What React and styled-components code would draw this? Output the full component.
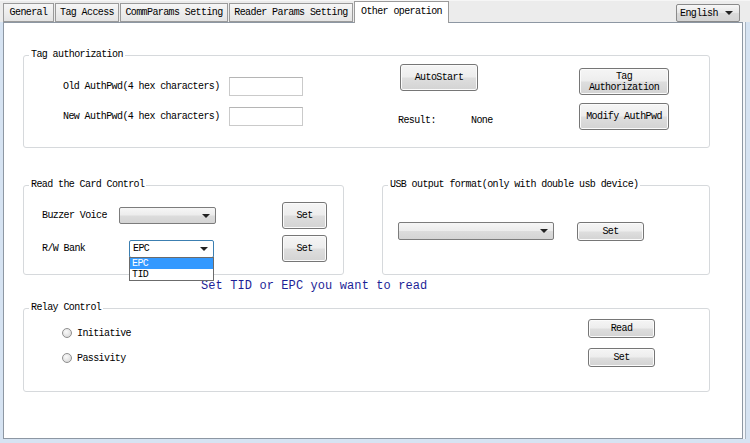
import React from "react";
import styled, { createGlobalStyle } from "styled-components";

const GlobalStyle = createGlobalStyle`
  html, body {
    margin: 0;
    padding: 0;
  }
  body {
    background: #d6e3f2;
  }
  * {
    box-sizing: border-box;
  }
`;

const mono = `"Liberation Mono", "DejaVu Sans Mono", monospace`;

const Window = styled.div`
  width: 750px;
  height: 443px;
  display: flex;
  flex-direction: column;
  background: #d6e3f2;
  font-family: ${mono};
  font-size: 10px;
  letter-spacing: -0.6px;
  color: #000;
  overflow: hidden;
`;

const Header = styled.div`
  height: 22px;
  display: flex;
  align-items: flex-end;
  padding: 0 10px 0 3px;
  background: #ececec;
  border-top: 1px solid #f6f6f6;
`;

const Tab = styled.div`
  position: relative;
  z-index: 1;
  width: ${(p) => p.$w}px;
  height: ${(p) => (p.$active ? 22 : 19)}px;
  margin-bottom: ${(p) => (p.$active ? -1 : 0)}px;
  margin-right: 1px;
  display: flex;
  align-items: ${(p) => (p.$active ? "flex-start" : "center")};
  justify-content: center;
  padding-top: ${(p) => (p.$active ? 4 : 0)}px;
  border: 1px solid #9a9a9a;
  border-bottom: ${(p) => (p.$active ? "none" : "1px solid #9a9a9a")};
  background: ${(p) =>
    p.$active ? "#ffffff" : "linear-gradient(#f6f6f6, #e4e4e4)"};
  white-space: nowrap;
`;

const LangBox = styled.div`
  margin-left: auto;
  width: 64px;
  height: 18px;
  display: flex;
  align-items: center;
  padding: 0 6px 0 3px;
  border: 1px solid #8a8a8a;
  border-radius: 2px;
  background: linear-gradient(#f7f7f7, #e6e6e6 50%, #dadada 51%, #d4d4d4);
  justify-content: space-between;
`;

const Arrow = styled.span`
  width: 0;
  height: 0;
  border-left: 4px solid transparent;
  border-right: 4px solid transparent;
  border-top: 4px solid #222;
`;

const Panel = styled.div`
  width: 740px;
  height: 417px;
  margin-left: 3px;
  background: #ffffff;
  border: 1px solid #8d97a3;
  box-shadow: 2px 0 0 #f4f7fb, 3px 0 0 #a9b4c0;
  padding: 32px 0 0 19px;
  display: flex;
  flex-direction: column;
`;

const Group = styled.div`
  position: relative;
  width: ${(p) => p.$w}px;
  height: ${(p) => p.$h}px;
  border: 1px solid #d6d9dc;
  border-radius: 3px;
  display: flex;
`;

const Legend = styled.span`
  position: absolute;
  top: -7px;
  left: 5px;
  padding: 0 2px;
  line-height: 12px;
  background: #ffffff;
  white-space: nowrap;
`;

const Column = styled.div`
  display: flex;
  flex-direction: column;
  width: ${(p) => (p.$w ? `${p.$w}px` : "auto")};
  padding-top: ${(p) => p.$top || 0}px;
  padding-left: ${(p) => p.$left || 0}px;
  gap: ${(p) => p.$gap || 0}px;
`;

const FieldRow = styled.div`
  display: flex;
  align-items: center;
  height: ${(p) => p.$h || 19}px;
`;

const Label = styled.span`
  width: ${(p) => p.$w}px;
  white-space: nowrap;
`;

const TextInput = styled.div`
  width: 74px;
  height: 19px;
  border: 1px solid #cacaca;
  border-top-color: #b5b5b5;
  background: #fff;
`;

const Button = styled.div`
  width: ${(p) => p.$w}px;
  height: ${(p) => p.$h}px;
  display: flex;
  align-items: center;
  justify-content: center;
  text-align: center;
  line-height: 11px;
  border: 1px solid #767676;
  border-radius: 3px;
  background: linear-gradient(#f5f5f5, #ededed 48%, #dedede 52%, #d3d3d3);
  box-shadow: inset 0 0 0 1px #fbfbfb;
  white-space: pre-line;
`;

const Combo = styled.div`
  position: relative;
  width: ${(p) => p.$w}px;
  height: ${(p) => p.$h}px;
  display: flex;
  align-items: center;
  justify-content: space-between;
  padding: 0 5px 0 3px;
  border: 1px solid ${(p) => (p.$focus ? "#3c7fb1" : "#7c7c7c")};
  border-radius: 2px;
  background: ${(p) =>
    p.$focus
      ? "#ffffff"
      : "linear-gradient(#f6f6f6, #ececec 48%, #dcdcdc 52%, #d4d4d4)"};
`;

const DropList = styled.div`
  position: absolute;
  z-index: 2;
  top: 100%;
  left: -1px;
  right: -1px;
  border: 1px solid #6b6b6b;
  background: #fff;
`;

const DropItem = styled.div`
  height: ${(p) => p.$h}px;
  line-height: ${(p) => p.$h}px;
  padding-left: 2px;
  color: ${(p) => (p.$sel ? "#fff" : "#000")};
  background: ${(p) => (p.$sel ? "#3399ff" : "transparent")};
`;

const ResultRow = styled.div`
  display: flex;
  margin-top: 24px;
  line-height: 12px;
`;

const MidRow = styled.div`
  display: flex;
  gap: 38px;
  margin-top: 37px;
`;

const Hint = styled.div`
  height: 33px;
  padding: 4px 0 0 178px;
  font-size: 12px;
  line-height: 14px;
  letter-spacing: 0.1px;
  color: #1d1f97;
  white-space: nowrap;
`;

const CardBody = styled.div`
  flex: 1;
  display: flex;
  flex-direction: column;
  gap: 6px;
  padding: 16px 16px 0 18px;
`;

const CardRow = styled.div`
  display: flex;
  align-items: center;
  height: 27px;
`;

const Push = styled.div`
  margin-left: ${(p) => (p.$at != null ? `${p.$at}px` : "auto")};
`;

const RadioRow = styled.div`
  display: flex;
  align-items: center;
  height: 14px;
  gap: 5px;
`;

const Radio = styled.span`
  width: 10px;
  height: 10px;
  border-radius: 50%;
  border: 1px solid #8f8f8f;
  background: radial-gradient(circle at 40% 35%, #fafafa, #d2d2d2);
`;

const RelayBody = styled.div`
  flex: 1;
  display: flex;
  justify-content: space-between;
  padding-right: 54px;
`;

const tabs = [
  ["General", 51],
  ["Tag Access", 64],
  ["CommParams Setting", 108],
  ["Reader Params Setting", 124],
  ["Other operation", 95, true],
];

export default function App() {
  return (
    <>
      <GlobalStyle />
      <Window>
        <Header>
          {tabs.map(([name, w, active]) => (
            <Tab key={name} $w={w} $active={active}>
              {name}
            </Tab>
          ))}
          <LangBox>
            English
            <Arrow />
          </LangBox>
        </Header>

        <Panel>
          <Group $w={687} $h={93}>
            <Legend>Tag authorization</Legend>
            <Column $w={374} $left={39} $top={21} $gap={11}>
              <FieldRow>
                <Label $w={166}>Old AuthPwd(4 hex characters)</Label>
                <TextInput />
              </FieldRow>
              <FieldRow>
                <Label $w={166}>New AuthPwd(4 hex characters)</Label>
                <TextInput />
              </FieldRow>
            </Column>
            <Column $w={181} $top={8}>
              <Push $at={2}>
                <Button $w={78} $h={27}>AutoStart</Button>
              </Push>
              <ResultRow>
                <Label $w={73}>Result:</Label>
                <span>None</span>
              </ResultRow>
            </Column>
            <Column $top={12} $gap={8}>
              <Button $w={90} $h={27}>{"Tag\nAuthorization"}</Button>
              <Button $w={90} $h={27}>Modify AuthPwd</Button>
            </Column>
          </Group>

          <MidRow>
            <Group $w={321} $h={90}>
              <Legend>Read the Card Control</Legend>
              <CardBody>
                <CardRow>
                  <Label $w={77}>Buzzer Voice</Label>
                  <Combo $w={97} $h={17}>
                    <span />
                    <Arrow />
                  </Combo>
                  <Push>
                    <Button $w={45} $h={27}>Set</Button>
                  </Push>
                </CardRow>
                <CardRow>
                  <Label $w={87}>R/W Bank</Label>
                  <Combo $w={85} $h={18} $focus>
                    <span>EPC</span>
                    <Arrow />
                    <DropList>
                      <DropItem $h={11} $sel>EPC</DropItem>
                      <DropItem $h={11}>TID</DropItem>
                    </DropList>
                  </Combo>
                  <Push>
                    <Button $w={45} $h={27}>Set</Button>
                  </Push>
                </CardRow>
              </CardBody>
            </Group>

            <Group $w={328} $h={90}>
              <Legend>USB output format(only with double usb device)</Legend>
              <Column $left={15} $top={35}>
                <FieldRow $h={20}>
                  <Combo $w={156} $h={18}>
                    <span />
                    <Arrow />
                  </Combo>
                  <Push $at={23}>
                    <Button $w={67} $h={19}>Set</Button>
                  </Push>
                </FieldRow>
              </Column>
            </Group>
          </MidRow>

          <Hint>Set TID or EPC you want to read</Hint>

          <Group $w={687} $h={84}>
            <Legend>Relay Control</Legend>
            <RelayBody>
              <Column $left={38} $top={17} $gap={11}>
                <RadioRow>
                  <Radio />
                  Initiative
                </RadioRow>
                <RadioRow>
                  <Radio />
                  Passivity
                </RadioRow>
              </Column>
              <Column $top={10} $gap={10}>
                <Button $w={67} $h={19}>Read</Button>
                <Button $w={67} $h={19}>Set</Button>
              </Column>
            </RelayBody>
          </Group>
        </Panel>
      </Window>
    </>
  );
}
